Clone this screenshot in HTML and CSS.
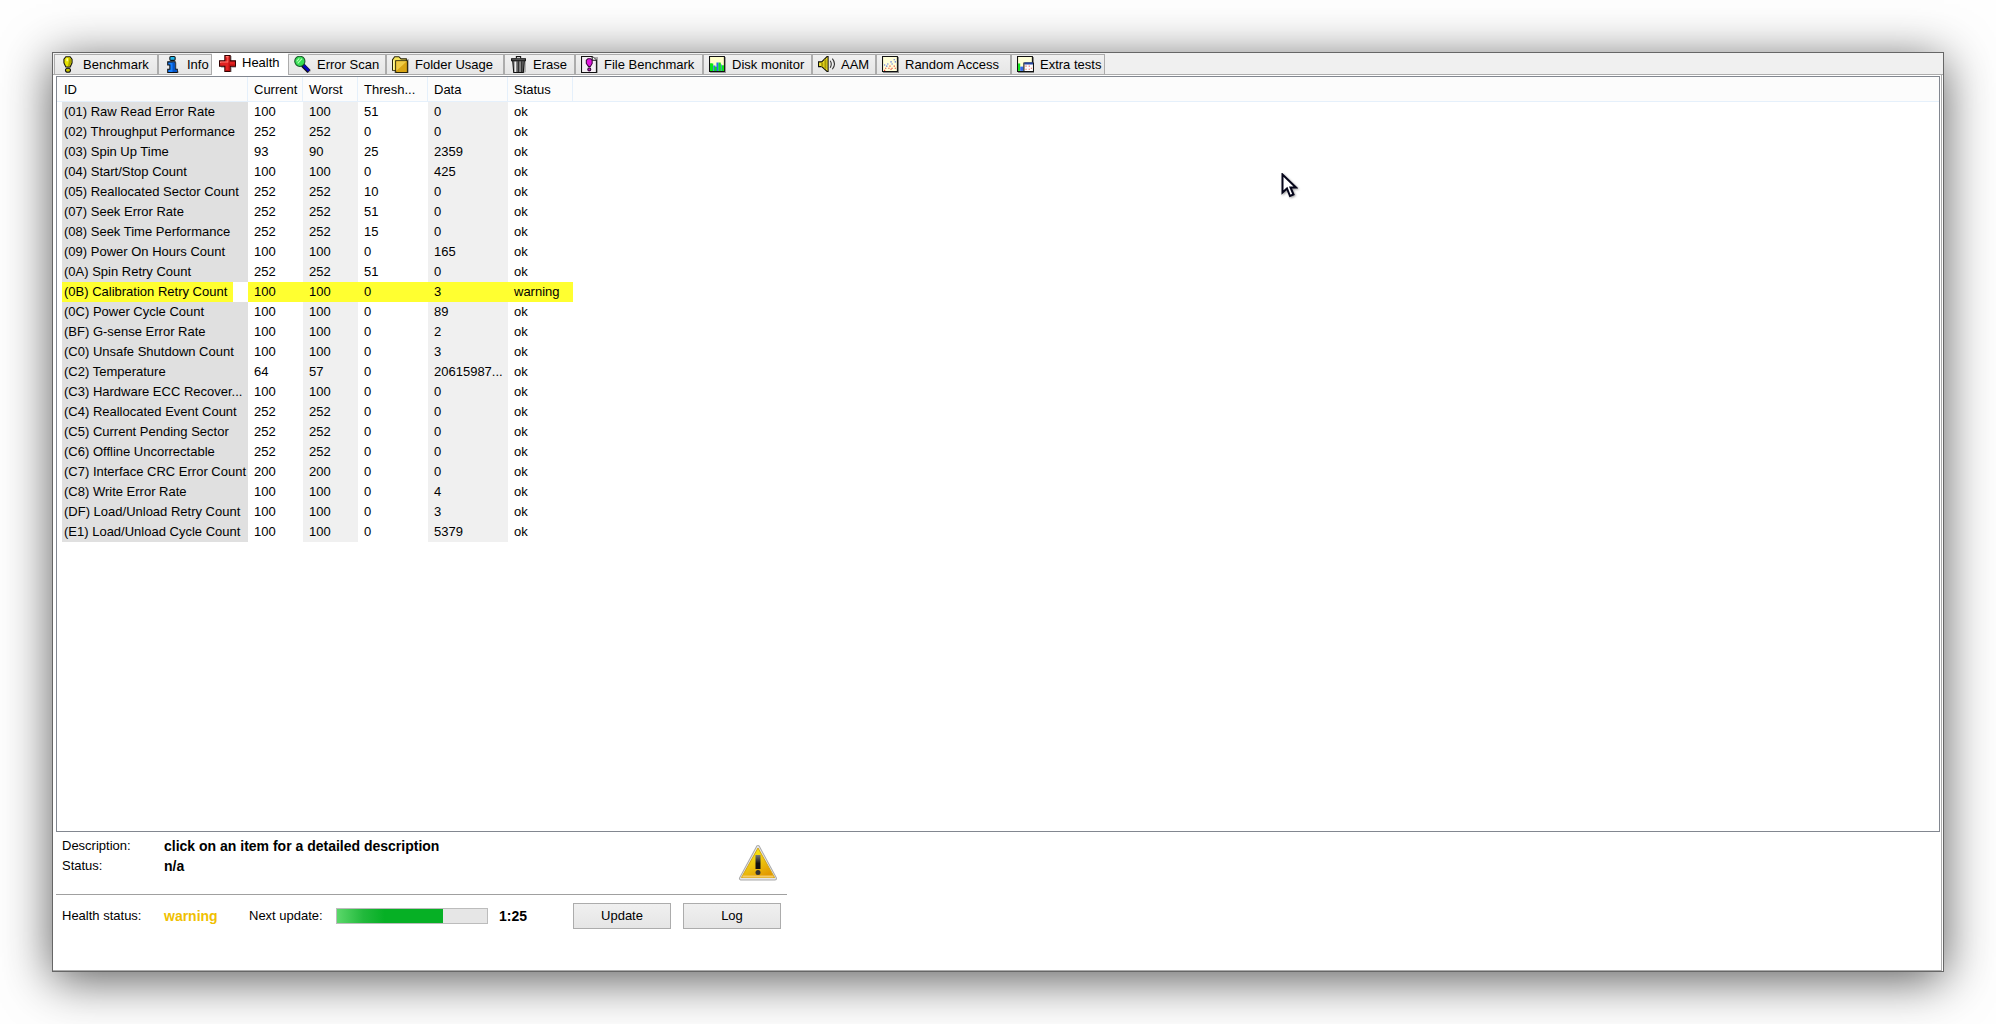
FILE: index.html
```html
<!DOCTYPE html>
<html lang="en">
<head>
<meta charset="utf-8">
<title>Disk health</title>
<link rel="stylesheet" href="styles.css">
</head>
<body>
<main class="window">
  <div class="tabs" role="tablist">
    <button class="tab" role="tab" type="button"><svg class="icon" viewBox="0 0 16 16"><path d="M6 15.500L5 10L3.500 6V3L5.500 .5h3.500L11 3v3L9.500 10z" fill="#888" transform="translate(1 .5)" opacity=".4"/><path d="M5.500 .7h4L11.300 3v3.500L9.500 10.300h-4L3.700 6.500V3z" fill="#e8e400" stroke="#111"/><path d="M9 1.500L10.500 3.500V6L9 9.500H7.500z" fill="#aaa500"/><path d="M6 2h1.500v3H6z" fill="#ffff90"/><ellipse cx="7.500" cy="13.400" rx="2.400" ry="1.900" fill="#c9c500" stroke="#111"/></svg>Benchmark</button>
    <button class="tab" role="tab" type="button"><svg class="icon" viewBox="0 0 16 16"><path d="M6 6h6v8h2v2H5v-2h1z" fill="#888" opacity=".5"/><rect x="5.500" y=".5" width="5" height="3.600" rx="1" fill="#21b7ea" stroke="#111"/><path d="M3.500 5.500h7v7h2v3h-9v-3h2v-4h-2z" fill="#1780ff" stroke="#111"/><path d="M8 6h2v7h2v2H8z" fill="#0755c8"/></svg>Info</button>
    <button class="tab tab-active" role="tab" type="button" aria-selected="true"><svg class="icon" viewBox="0 0 16 16"><path d="M6 1h6v5h4v6h-4v4H6v-4H2V6h4z" fill="#777" opacity=".6"/><path d="M5.500 .5h5v5h5v5h-5v5h-5v-5h-5v-5h5z" fill="#e32222" stroke="#300"/><path d="M6.500 1.500h2v5h-7v1" fill="none" stroke="#ff7b70"/><path d="M9.500 2v8M6.500 14.500h3v-5h5" fill="none" stroke="#b90f0f"/></svg>Health</button>
    <button class="tab" role="tab" type="button"><svg class="icon" viewBox="0 0 16 16"><path d="M9 9l6 6" stroke="#888" stroke-width="4" opacity=".5"/><path d="M8 8.500l6 6" stroke="#111" stroke-width="4"/><path d="M9 9l5 5" stroke="#0505c0" stroke-width="2.500"/><circle cx="5.500" cy="5" r="4.800" fill="#35df54" stroke="#17552a"/><path d="M2.500 5L5 2.300M3.500 7L7.500 2.500" stroke="#b5ffb5"/></svg>Error Scan</button>
    <button class="tab" role="tab" type="button"><svg class="icon" viewBox="0 0 16 16"><path d="M2 3h14v13H2z" fill="#888" opacity=".6"/><path d="M.5 13.500v-10L2.500 .7h4l2 2h5v11z" fill="#f6e65b" stroke="#29240b"/><path d="M3.500 4.500h11v11h-11z" fill="#d9a514" stroke="#29240b"/><path d="M4 5h10L4 14z" fill="#f0cc45"/><path d="M1.500 4v9" stroke="#fffbb0"/></svg>Folder Usage</button>
    <button class="tab" role="tab" type="button"><svg class="icon" viewBox="0 0 16 16"><path d="M3 5h12v10l-2 1H4z" fill="#777" opacity=".5"/><path d="M2.500 4h11l-1 11.500h-9z" fill="#777" stroke="#111"/><path d="M5 5v10" stroke="#eee" stroke-width="1.500"/><path d="M8 5v10M11 5v10" stroke="#333" stroke-width="1.500"/><path d="M9.500 5v10" stroke="#999"/><path d="M1.500 2.500h13v2h-13z" fill="#666" stroke="#111"/><path d="M6 2V.5h4V2" fill="#ccc" stroke="#111"/></svg>Erase</button>
    <button class="tab" role="tab" type="button"><svg class="icon" viewBox="0 0 16 16"><path d="M2 1h14v15H2z" fill="#777" opacity=".6"/><path d="M.5 .5h10L14.500 4v11.500H.5z" fill="#f4eff4" stroke="#111"/><path d="M10.500 .5V4h4" fill="#fff" stroke="#111"/><path d="M6.500 2.500h2.500L10.500 4v3L8.800 9.800H7L5 7V4z" fill="#e315df" stroke="#37063a"/><circle cx="7.800" cy="12.600" r="1.400" fill="#c016bd" stroke="#37063a"/></svg>File Benchmark</button>
    <button class="tab" role="tab" type="button"><svg class="icon" viewBox="0 0 16 16"><path d="M1 1h15v15H1z" fill="#999"/><path d="M.5 .5h14v14H.5z" fill="#ffffc9" stroke="#111"/><path d="M1 7h3v7H1zM6 10h2v4H6zM9 6h2v8H9zM12 9h2v5h-2z" fill="#0be615"/><path d="M4 9h2v5H4zM7 6h2v8H7zM11 8h1v6h-1z" fill="#3267ef"/><path d="M1 7h2v7H1zM5 10h2v4H5zM9 7h2v7H9zM12 9h2v5h-2z" fill="#0be615"/></svg>Disk monitor</button>
    <button class="tab" role="tab" type="button"><svg class="icon" viewBox="0 0 16 16"><path d="M.5 5.500h3l5-5h1v14h-1l-5-4.500h-3z" fill="#f4e52a" stroke="#111"/><path d="M7 3v9M4 6v4" stroke="#a69a08" stroke-width="2"/><path d="M11.500 4.500q2 3 0 6.500M13.500 2.500q4 5 0 10" fill="none" stroke="#333"/></svg>AAM</button>
    <button class="tab" role="tab" type="button"><svg class="icon" viewBox="0 0 16 16"><path d="M1 1h15v15H1z" fill="#888"/><path d="M.5 .5h14v14H.5z" fill="#ffffd8" stroke="#111"/><path d="M11 3h1v1h-1zM8 5h1v1H8zM12 5h1v1h-1zM5 7h1v1H5zM9 7h1v1H9zM2 8h1v1H2zM4 9h1v1H4z" fill="#2647df"/><path d="M11 9h1v1h-1zM7 9h1v1H7zM3 11h1v1H3zM6 11h1v1H6zM9 11h1v1H9zM12 11h1v1h-1zM2 13h1v1H2zM8 12h1v1H8z" fill="#e72320"/></svg>Random Access</button>
    <button class="tab" role="tab" type="button"><svg class="icon" viewBox="0 0 16 16"><path d="M1 1h15v15H1z" fill="#888"/><path d="M.5 .5h14v14H.5z" fill="#ffffd8" stroke="#111"/><path d="M1 7h2v7H1z" fill="#0be615"/><path d="M3 10h3v4H3z" fill="#3267ef"/><path d="M6.500 6.500h9v8h-9z" fill="#fff" stroke="#111"/><path d="M7 6h8v2H7z" fill="#2544a0"/><path d="M8 9h1v1H8zM11 9h1v1h-1zM13 11h1v1h-1zM8 12h1v1H8zM11 12h1v1h-1z" fill="#e64c44"/></svg>Extra tests</button>
  </div>
  <section class="page" role="tabpanel">
    <div class="list">
      <table class="smart">
        <colgroup><col class="col-id"><col class="col-num"><col class="col-num"><col class="col-thresh"><col class="col-data"><col class="col-status"><col></colgroup>
        <thead><tr><th>ID</th><th>Current</th><th>Worst</th><th>Thresh...</th><th>Data</th><th>Status</th><td></td></tr></thead>
        <tbody>
          <tr><td>(01) Raw Read Error Rate</td><td>100</td><td>100</td><td>51</td><td>0</td><td>ok</td></tr>
          <tr><td>(02) Throughput Performance</td><td>252</td><td>252</td><td>0</td><td>0</td><td>ok</td></tr>
          <tr><td>(03) Spin Up Time</td><td>93</td><td>90</td><td>25</td><td>2359</td><td>ok</td></tr>
          <tr><td>(04) Start/Stop Count</td><td>100</td><td>100</td><td>0</td><td>425</td><td>ok</td></tr>
          <tr><td>(05) Reallocated Sector Count</td><td>252</td><td>252</td><td>10</td><td>0</td><td>ok</td></tr>
          <tr><td>(07) Seek Error Rate</td><td>252</td><td>252</td><td>51</td><td>0</td><td>ok</td></tr>
          <tr><td>(08) Seek Time Performance</td><td>252</td><td>252</td><td>15</td><td>0</td><td>ok</td></tr>
          <tr><td>(09) Power On Hours Count</td><td>100</td><td>100</td><td>0</td><td>165</td><td>ok</td></tr>
          <tr><td>(0A) Spin Retry Count</td><td>252</td><td>252</td><td>51</td><td>0</td><td>ok</td></tr>
          <tr class="row-warning"><td>(0B) Calibration Retry Count</td><td>100</td><td>100</td><td>0</td><td>3</td><td>warning</td></tr>
          <tr><td>(0C) Power Cycle Count</td><td>100</td><td>100</td><td>0</td><td>89</td><td>ok</td></tr>
          <tr><td>(BF) G-sense Error Rate</td><td>100</td><td>100</td><td>0</td><td>2</td><td>ok</td></tr>
          <tr><td>(C0) Unsafe Shutdown Count</td><td>100</td><td>100</td><td>0</td><td>3</td><td>ok</td></tr>
          <tr><td>(C2) Temperature</td><td>64</td><td>57</td><td>0</td><td>20615987...</td><td>ok</td></tr>
          <tr><td>(C3) Hardware ECC Recover...</td><td>100</td><td>100</td><td>0</td><td>0</td><td>ok</td></tr>
          <tr><td>(C4) Reallocated Event Count</td><td>252</td><td>252</td><td>0</td><td>0</td><td>ok</td></tr>
          <tr><td>(C5) Current Pending Sector</td><td>252</td><td>252</td><td>0</td><td>0</td><td>ok</td></tr>
          <tr><td>(C6) Offline Uncorrectable</td><td>252</td><td>252</td><td>0</td><td>0</td><td>ok</td></tr>
          <tr><td>(C7) Interface CRC Error Count</td><td>200</td><td>200</td><td>0</td><td>0</td><td>ok</td></tr>
          <tr><td>(C8) Write Error Rate</td><td>100</td><td>100</td><td>0</td><td>4</td><td>ok</td></tr>
          <tr><td>(DF) Load/Unload Retry Count</td><td>100</td><td>100</td><td>0</td><td>3</td><td>ok</td></tr>
          <tr><td>(E1) Load/Unload Cycle Count</td><td>100</td><td>100</td><td>0</td><td>5379</td><td>ok</td></tr>
        </tbody>
      </table>
    </div>
    <div class="details">
      <div class="description">
        <dl class="facts">
          <dt>Description:</dt><dd>click on an item for a detailed description</dd>
          <dt>Status:</dt><dd>n/a</dd>
        </dl>
        <svg class="alert" viewBox="0 0 40 38" role="img" aria-label="Warning">
          <defs>
            <linearGradient id="amber" x1="0" y1="0" x2=".6" y2="1"><stop offset="0" stop-color="#ffff10"/><stop offset=".55" stop-color="#eec811"/><stop offset="1" stop-color="#e29a00"/></linearGradient>
            <linearGradient id="bar" x1="0" y1="0" x2="0" y2="1"><stop offset="0" stop-color="#777"/><stop offset=".6" stop-color="#111"/></linearGradient>
          </defs>
          <path d="M20 3L3 34.500h34z" fill="#ddd" stroke="#aaa" stroke-width="4" stroke-linejoin="round"/>
          <path d="M20 3L3 34.500h34z" fill="#ddd" stroke="#e6e6e6" stroke-width="2" stroke-linejoin="round"/>
          <path d="M20 4L3.500 33.500h33z" fill="url(#amber)" stroke="#d5a513"/>
          <path d="M4.500 32.500h31" stroke="#f5c963" stroke-width="2"/>
          <path d="M17.500 11h5v14h-5z" fill="url(#bar)"/><circle cx="20" cy="28.500" r="2.500" fill="#333"/>
        </svg>
      </div>
      <div class="controls">
        <span class="label-health">Health status:</span>
        <strong class="health-value">warning</strong>
        <label class="label-update" for="countdown">Next update:</label>
        <progress class="countdown" id="countdown" value="106" max="150"></progress>
        <strong class="time">1:25</strong>
        <button class="button" type="button">Update</button>
        <button class="button" type="button">Log</button>
      </div>
    </div>
  </section>
</main>
<svg class="cursor" viewBox="0 0 17 25" aria-hidden="true"><path d="M1.500 1.500v18l4.500-4 3 7.500 3.500-1.500-3-7h5.500z" fill="#fff" stroke="#05051a" stroke-width="2"/></svg>
</body>
</html>
```
FILE: styles.css
```css
* { box-sizing: border-box; }

body {
  margin: 0;
  min-height: 100vh;
  padding: 52px;
  display: flex;
  background: #fefefe;
  color: #000;
  font: 13px/20px "Liberation Sans", Arial, sans-serif;
}

button { font: inherit; color: inherit; }

.window {
  flex: 1;
  display: flex;
  flex-direction: column;
  min-width: 0;
  border: 1px solid #666;
  background: #fff;
  box-shadow: 0 8px 46px rgba(0, 0, 0, .64);
}

/* Tab strip */
.tabs {
  display: grid;
  grid-template-columns: 104px 54px 76px 98px 118px 71px 128px 109px 64px 135px 94px;
  height: 22px;
  padding-left: 1px;
  background: #f0f0f0;
  border-bottom: 1px solid #acacac;
}

.tab {
  display: flex;
  align-items: center;
  gap: 6px;
  height: 20px;
  margin-top: 1px;
  padding: 0 0 0 5px;
  border: 1px solid #acacac;
  border-bottom: 0;
  background: linear-gradient(#f0f0f0, #e6e6e6);
  line-height: 18px;
  white-space: nowrap;
}

.tab-active {
  height: 22px;
  margin-top: 0;
  padding: 0 0 2px 7px;
  border: 0;
  background: #fff;
}

.icon { width: 17px; height: 17px; flex: none; }

/* Tab page */
.page {
  flex: 1;
  display: flex;
  flex-direction: column;
  margin-right: 1px;
  padding: 1px 1px 0 3px;
  border-right: 1px solid #acacac;
  border-bottom: 1px solid #acacac;
}

.list {
  flex: 1;
  border: 1px solid #828790;
  background: #fff;
}

.smart {
  width: 100%;
  table-layout: fixed;
  border-collapse: separate;
  border-spacing: 0;
}

.col-id { width: 191px; }
.col-num { width: 55px; }
.col-thresh { width: 70px; }
.col-data { width: 80px; }
.col-status { width: 65px; }

.smart th,
.smart td {
  height: 20px;
  padding: 0 0 0 6px;
  text-align: left;
  font-weight: normal;
  line-height: 20px;
  white-space: nowrap;
}

.smart thead th,
.smart thead td {
  height: 25px;
  padding-top: 2px;
  border-bottom: 1px solid #e5f0fb;
  background: #fcfcfc;
}

.smart thead th { border-right: 1px solid #e5f0fb; }
.smart thead th:first-child { padding-left: 7px; }

.smart tbody td:first-child {
  padding-left: 2px;
  border-left: 5px solid #fff;
  background: #e0e0e0;
}

.smart tbody td:nth-child(3),
.smart tbody td:nth-child(5) { background: #f0f0f0; }

.smart .row-warning td:nth-child(n) { background: #ffff30; }
.smart .row-warning td:first-child { background: linear-gradient(to right, #ffff30 171px, #fff 171px); }

/* Description and status area */
.details { width: 731px; height: 138px; }

.description {
  display: flex;
  justify-content: space-between;
  height: 63px;
  padding: 4px 9px 0 6px;
  border-bottom: 1px solid #a0a0a0;
}

.facts {
  display: grid;
  grid-template-columns: 102px auto;
  grid-auto-rows: 20px;
  margin: 0;
}

.facts dd { margin: 0; font-size: 14px; font-weight: bold; }

.alert { width: 40px; height: 38px; margin-top: 8px; }

.controls {
  display: flex;
  align-items: center;
  height: 42px;
  padding: 0 6px;
}

.label-health { width: 102px; }
.health-value { width: 85px; font-size: 14px; color: #f0c000; }
.label-update { width: 87px; }
.time { width: 74px; font-size: 14px; }

.countdown {
  appearance: none;
  width: 152px;
  height: 16px;
  margin-right: 11px;
  border: 1px solid #bcbcbc;
  background: #e6e6e6;
}

.countdown::-webkit-progress-bar { background: #e6e6e6; }

.countdown::-webkit-progress-value {
  background: linear-gradient(to right, #5bd86a, #22b93c 25%, #06b025 45%);
}

.button {
  width: 98px;
  height: 26px;
  padding: 0;
  border: 1px solid #acacac;
  background: linear-gradient(#f0f0f0, #e5e5e5);
}

.button + .button { margin-left: 12px; }

/* Mouse pointer lying over the list */
.cursor {
  position: absolute;
  left: 1281px;
  top: 173px;
  width: 17px;
  height: 25px;
  filter: drop-shadow(1px 1px 1px rgba(0, 0, 0, .4));
}
```
